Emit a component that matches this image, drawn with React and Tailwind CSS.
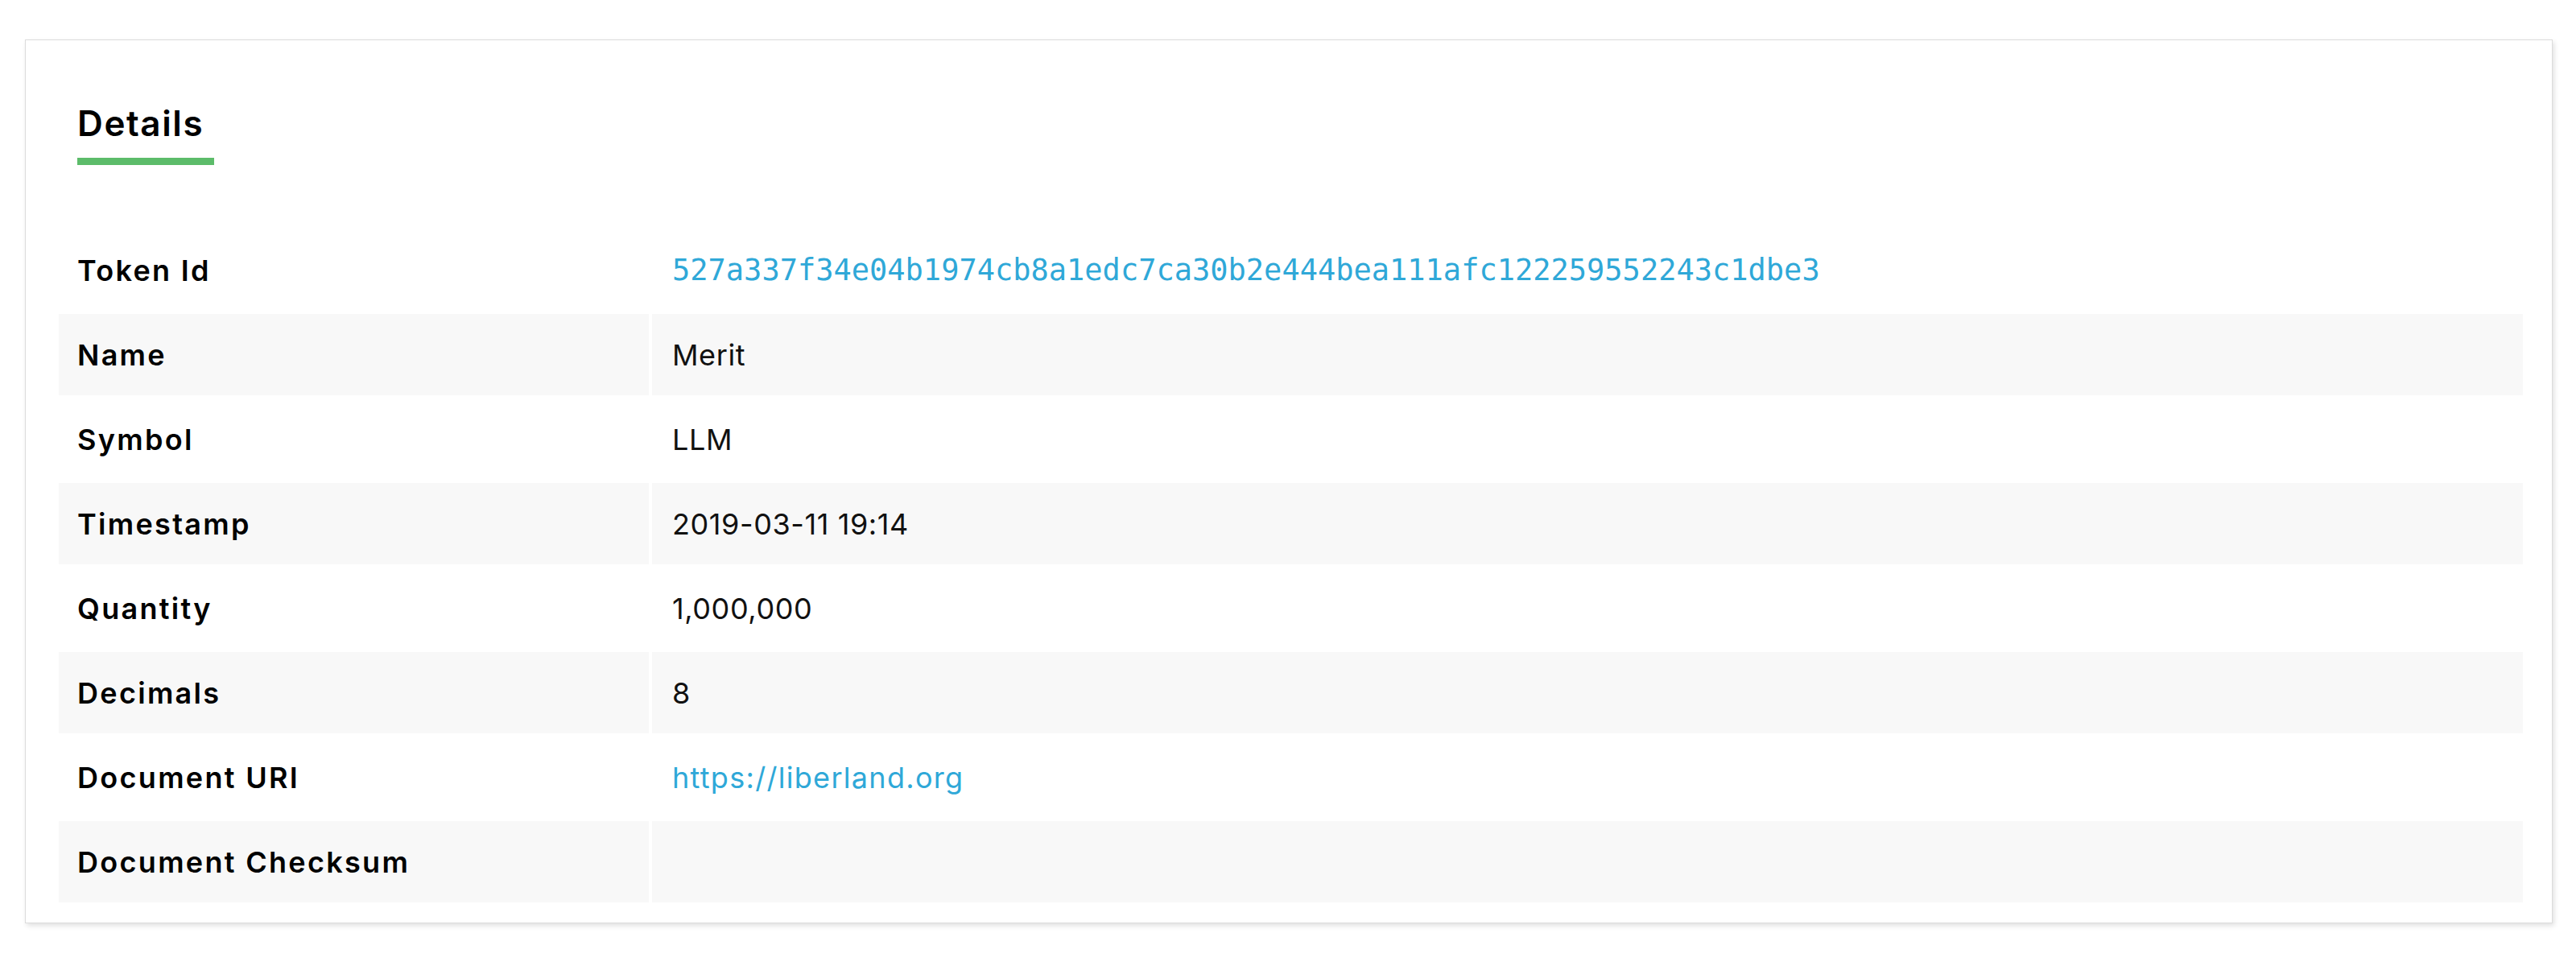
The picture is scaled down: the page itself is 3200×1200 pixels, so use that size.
import React from "react";

const rows = [
  { label: "Token Id", value: "527a337f34e04b1974cb8a1edc7ca30b2e444bea111afc122259552243c1dbe3", kind: "hash" },
  { label: "Name", value: "Merit" },
  { label: "Symbol", value: "LLM" },
  { label: "Timestamp", value: "2019-03-11 19:14" },
  { label: "Quantity", value: "1,000,000" },
  { label: "Decimals", value: "8" },
  { label: "Document URI", value: "https://liberland.org", kind: "link" },
  { label: "Document Checksum", value: "" },
];

function DetailRow({ row, shaded }) {
  const bg = shaded ? "bg-[#f8f8f8]" : "bg-white";
  return (
    <div className="grid grid-cols-[733px_1fr] gap-x-[4px]">
      <div className={`${bg} h-[101px] flex items-center pl-[23px] text-[36px] font-semibold tracking-[2.3px] text-black`}>
        {row.label}
      </div>
      <div className={`${bg} h-[101px] flex items-center pl-[25px]`}>
        {row.kind === "hash" ? (
          <span
            className="text-[37px] text-[#2fa8d8]"
            style={{ fontFamily: '"DejaVu Sans Mono", "Liberation Mono", monospace' }}
          >
            {row.value}
          </span>
        ) : row.kind === "link" ? (
          <a href="#" className="text-[36px] tracking-[1.3px] text-[#2fa8d8]">
            {row.value}
          </a>
        ) : (
          <span className="text-[36px] tracking-[0.6px] text-[#111]">{row.value}</span>
        )}
      </div>
    </div>
  );
}

export default function App() {
  return (
    <div
      className="w-[3200px] h-[1200px] bg-white pt-[49px] pl-[31px]"
      style={{ fontFamily: "Inter, 'Noto Sans', sans-serif" }}
    >
      {/* card */}
      <div className="w-[3140px] h-[1098px] bg-white border border-[#dcdcdc] shadow-[2px_3px_6px_rgba(0,0,0,0.12)] pl-[41px] pr-[36px] pt-[81px]">
        <div className="pl-[23px]">
          <h2 className="text-[44px] leading-[44px] font-semibold text-black tracking-[1.6px]">Details</h2>
          <div className="mt-[21px] w-[170px] h-[9px] bg-[#5cbc6a]" />
        </div>

        <div className="mt-[80px] flex flex-col gap-y-[4px]">
          {rows.map((row, i) => (
            <DetailRow key={row.label} row={row} shaded={i % 2 === 1} />
          ))}
        </div>
      </div>
    </div>
  );
}
